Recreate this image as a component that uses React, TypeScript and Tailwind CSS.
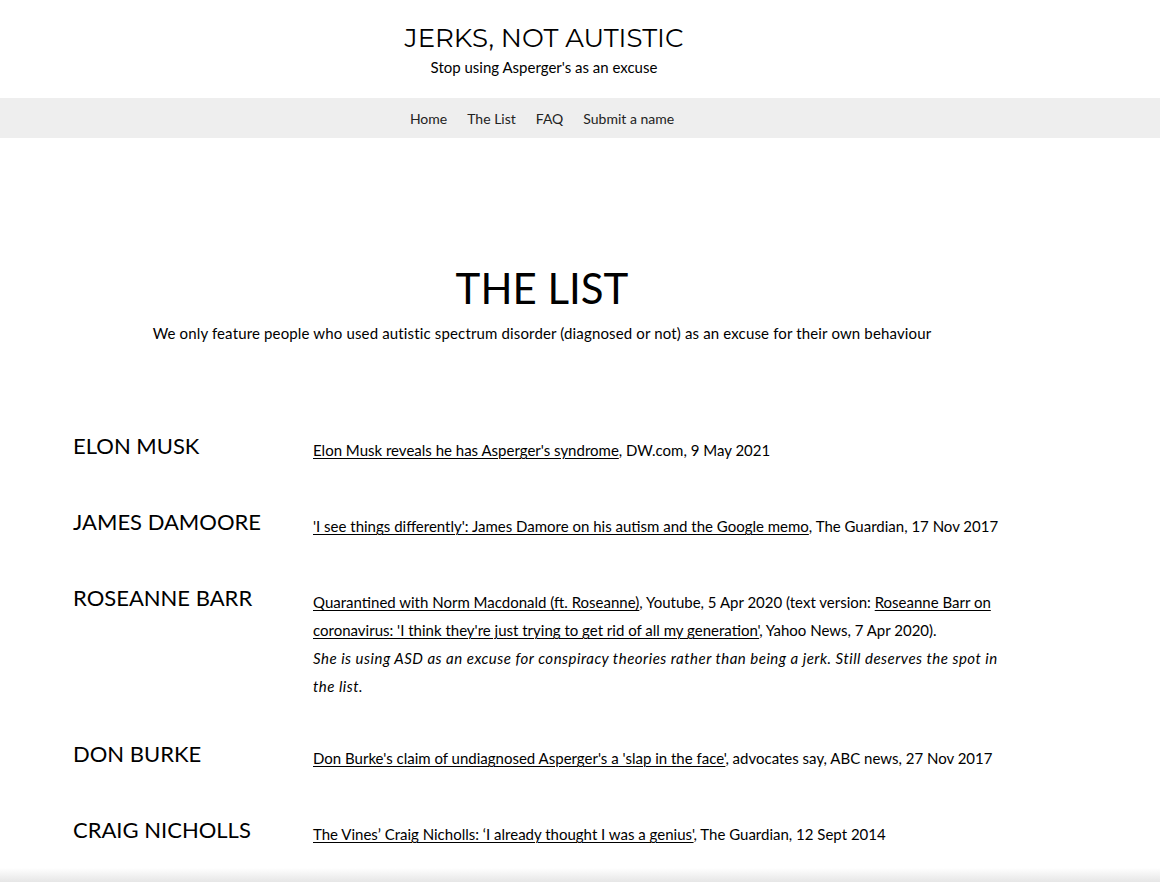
import React from 'react'

type Entry = {
  name: string
  body: React.ReactNode
  tight?: boolean
}

const linkCls = 'underline underline-offset-2 decoration-1'

const entries: Entry[] = [
  {
    name: 'ELON MUSK',
    body: (
      <p>
        <a href="#" className={linkCls}>Elon Musk reveals he has Asperger's syndrome</a>, DW.com, 9 May 2021
      </p>
    ),
  },
  {
    name: 'JAMES DAMOORE',
    body: (
      <p>
        <a href="#" className={linkCls}>'I see things differently': James Damore on his autism and the Google memo</a>, The Guardian, 17 Nov 2017
      </p>
    ),
  },
  {
    name: 'ROSEANNE BARR',
    tight: true,
    body: (
      <>
        <p>
          <a href="#" className={linkCls}>Quarantined with Norm Macdonald (ft. Roseanne)</a>, Youtube, 5 Apr 2020 (text version:{' '}
          <a href="#" className={linkCls}>Roseanne Barr on coronavirus: 'I think they're just trying to get rid of all my generation'</a>, Yahoo News, 7 Apr 2020).
        </p>
        <p className="italic tracking-[0.5px]">
          She is using ASD as an excuse for conspiracy theories rather than being a jerk. Still deserves the spot in the list.
        </p>
      </>
    ),
  },
  {
    name: 'DON BURKE',
    body: (
      <p>
        <a href="#" className={linkCls}>Don Burke's claim of undiagnosed Asperger's a 'slap in the face'</a>, advocates say, ABC news, 27 Nov 2017
      </p>
    ),
  },
  {
    name: 'CRAIG NICHOLLS',
    body: (
      <p>
        <a href="#" className={linkCls}>The Vines’ Craig Nicholls: ‘I already thought I was a genius'</a>, The Guardian, 12 Sept 2014
      </p>
    ),
  },
]

const navItems = ['Home', 'The List', 'FAQ', 'Submit a name']

export default function App() {
  return (
    <div className="w-[1160px] h-[882px] overflow-hidden bg-white text-black flex flex-col font-['Lato','Open_Sans',sans-serif]">
      {/* Header */}
      <header className="pt-[20px] h-[98px] flex flex-col items-center pr-[72px]">
        <h1 className="text-[26px] leading-[36px] font-['Montserrat','Raleway','Lato',sans-serif]">
          JERKS, NOT AUTISTIC
        </h1>
        <p className="text-[15px] leading-[20px] mt-[1px]">Stop using Asperger's as an excuse</p>
      </header>

      {/* Nav */}
      <nav className="h-[40px] bg-[#eeeeee] flex items-center justify-center gap-[20px] pr-[76px] text-[14px]">
        {navItems.map((item) => (
          <a key={item} href="#" className="text-[#222]">
            {item}
          </a>
        ))}
      </nav>

      <main className="flex-1 flex flex-col">
        <section className="pt-[126px] flex flex-col items-center pr-[76px]">
          <h2 className="text-[42px] leading-[48px] font-['Lato',sans-serif]">THE LIST</h2>
          <p className="mt-[10px] text-[15px] leading-[22px] tracking-[0.15px]">
            We only feature people who used autistic spectrum disorder (diagnosed or not) as an excuse for their own behaviour
          </p>
        </section>

        <section className="mt-[92px] pl-[73px] flex flex-col gap-[48px]">
          {entries.map((e) => (
            <div key={e.name} className={`flex ${e.tight ? 'mb-[-4px]' : ''}`}>
              <div className="w-[240px] shrink-0 text-[22px] leading-[28px] -mt-[4px]">{e.name}</div>
              <div className="w-[700px] text-[15px] leading-[28px]">{e.body}</div>
            </div>
          ))}
        </section>
      </main>

      <div className="h-[14px] shrink-0 bg-gradient-to-b from-white to-[#e6e6e6]" />
    </div>
  )
}
